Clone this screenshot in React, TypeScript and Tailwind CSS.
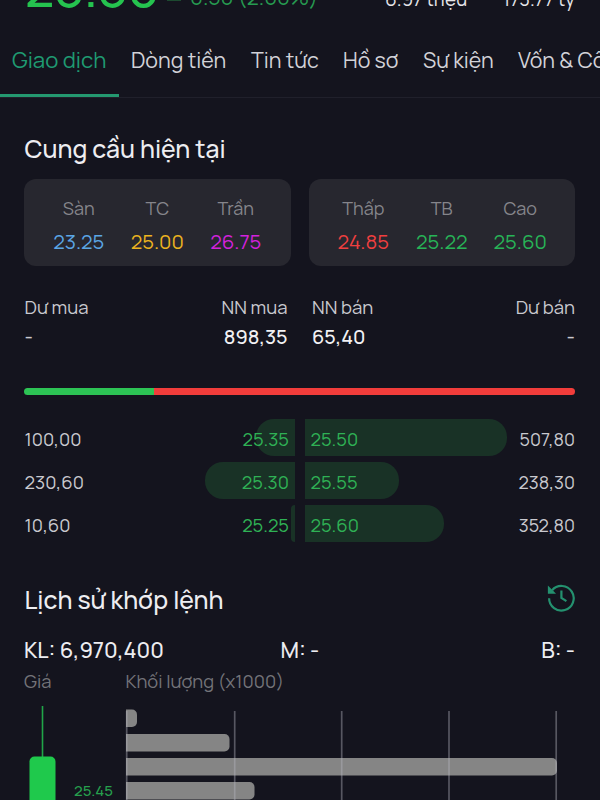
const tabs = [
  { label: 'Giao dịch', cls: 'w-[119px] pl-3 text-[22.2px] text-[#1f9b72]' },
  { label: 'Dòng tiền', cls: 'w-[120px] pl-3 text-[#d2d2d8]' },
  { label: 'Tin tức', cls: 'w-[92px] pl-3 text-[#d2d2d8]' },
  { label: 'Hồ sơ', cls: 'w-20 pl-3 text-[#d2d2d8]' },
  { label: 'Sự kiện', cls: 'w-[95px] pl-3 text-[#d2d2d8]' },
  { label: 'Vốn & Cổ đông', cls: 'pl-3 text-[#d2d2d8]' },
];

const bands = [
  [
    { label: 'Sàn', value: '23.25', color: 'text-[#5ba6e6]' },
    { label: 'TC', value: '25.00', color: 'text-[#edb41f]' },
    { label: 'Trần', value: '26.75', color: 'text-[#d322dc]' },
  ],
  [
    { label: 'Thấp', value: '24.85', color: 'text-[#ef3f3f]' },
    { label: 'TB', value: '25.22', color: 'text-[#27b457]' },
    { label: 'Cao', value: '25.60', color: 'text-[#27b457]' },
  ],
];

const depth = [
  { bidVol: '100,00', bid: '25.35', bidBar: 'w-[39px]', ask: '25.50', askVol: '507,80', askBar: 'w-[202px]' },
  { bidVol: '230,60', bid: '25.30', bidBar: 'w-[90px]', ask: '25.55', askVol: '238,30', askBar: 'w-[94.5px]' },
  { bidVol: '10,60', bid: '25.25', bidBar: 'w-1', ask: '25.60', askVol: '352,80', askBar: 'w-[139.5px]' },
];

const volumes = [
  { y: 9.5, end: 137 },
  { y: 34, end: 229.5 },
  { y: 58, end: 557 },
  { y: 82, end: 254.5 },
];

function QuoteHeader() {
  return (
    <header className="flex h-6 shrink-0 items-end overflow-hidden whitespace-nowrap pl-[25px] pr-[25px]">
      <div className="flex h-12 w-[142px] items-center text-[51px] font-medium leading-[48px] text-[#25c34f] -translate-y-[12px]">25.50</div>
      <div className="flex h-6 w-[23px] items-center -translate-y-[12px]"><span className="h-[2px] w-3.5 bg-[#1c4a30]" /></div>
      <div className="text-[21.2px] leading-6 w-[195px] text-[#269a50] -translate-y-[15px]">0.50 (2.00%)</div>
      <div className="text-[18.9px] leading-6 text-[#e6e6ea] -translate-y-[13px]">6.97 triệu</div>
      <div className="ml-auto text-[18.8px] leading-6 text-[#e6e6ea] -translate-y-[13px]">173.77 tỷ</div>
    </header>
  );
}

function HistoryIcon() {
  return (
    <svg className="h-[30px] w-[30px] shrink-0 -translate-y-[2px]" viewBox="0 0 30 30" fill="none" stroke="#24916f" strokeWidth="2.2">
      <path d="M3.1 15.2A12.3 12.3 0 1 0 6.1 7.2" />
      <path d="M1.9 2.6V10.8H10.1Z" fill="#24916f" stroke="none" />
      <path d="M15.4 7.4V14.9L20.4 18.1" />
    </svg>
  );
}

function VolumeChart() {
  return (
    <svg className="block h-[100px] w-[600px] shrink-0" viewBox="0 0 600 100">
      <path d="M42.5 6V58" stroke="#20a648" strokeWidth="1.6" />
      <rect x="29.5" y="56.5" width="26" height="60" rx="5" fill="#1fc94c" />
      <text x="74" y="96.3" fontSize="15" fontWeight="500" textLength="39" fill="#269f4d">25.45</text>
      {volumes.map((v) => (
        <path key={v.y} fill="#858585" d={`M126 ${v.y}H${v.end - 5}a5 5 0 0 1 5 5v7.5a5 5 0 0 1 -5 5H126Z`} />
      ))}
      {[126.7, 234.7, 341.7, 449, 556.2].map((x) => (
        <path key={x} d={`M${x} 11V100`} stroke="#b4b4be" strokeOpacity="0.42" strokeWidth="1.7" />
      ))}
    </svg>
  );
}

export default function App() {
  return (
    <div className="flex h-[800px] w-[600px] flex-col overflow-hidden bg-[#14141e] font-['Manrope','Inter',sans-serif] text-[#ededf1]">
      <QuoteHeader />
      <nav className="flex h-[74px] shrink-0 overflow-hidden whitespace-nowrap border-b border-[#20202b] text-[21.4px]">
        {tabs.map((t, i) => (
          <div key={t.label} className={`flex shrink-0 flex-col leading-[71px] ${t.cls}`}>
            <span className="h-[70px]">{t.label}</span>
            {i === 0 && <span className="-ml-3 h-[3.5px] bg-[#249970]" />}
          </div>
        ))}
      </nav>

      <h2 className="mt-[35px] h-8 shrink-0 pl-[24.5px] text-[24.8px] font-medium leading-8">Cung cầu hiện tại</h2>

      <section className="mt-3.5 flex shrink-0 gap-[18px] pl-6 pr-[25px]">
        {bands.map((band) => (
          <div key={band[0].label} className="grid h-[87px] flex-1 grid-cols-3 rounded-xl bg-[#27272f] px-[15.5px] pt-[17px] text-center">
            {band.map((b) => (
              <div key={b.label}>
                <div className="text-[18px] leading-6 text-[#85858b]">{b.label}</div>
                <div className={`mt-[9px] text-[20.3px] leading-6 ${b.color}`}>{b.value}</div>
              </div>
            ))}
          </div>
        ))}
      </section>

      <section className="mt-[27px] flex shrink-0 justify-between pl-[24.5px] pr-[25px] text-[18.5px] leading-7 text-[#c9c9cf]">
        <div className="w-[131px]"><div>Dư mua</div><div className="text-xl font-medium leading-8">-</div></div>
        <div className="w-[132px] text-right"><div>NN mua</div><div className="text-[19.8px] font-medium leading-8 text-[#f1f1f4]">898,35</div></div>
        <div className="ml-[24.5px] w-[131px]"><div>NN bán</div><div className="text-[19.8px] font-medium leading-8 text-[#f1f1f4]">65,40</div></div>
        <div className="flex-1 text-right"><div>Dư bán</div><div className="text-xl font-medium leading-8">-</div></div>
      </section>

      <div className="ml-6 mt-[35px] flex h-[7px] w-[551px] shrink-0 overflow-hidden rounded-full">
        <span className="w-[130px] bg-[#2dc455]" />
        <span className="flex-1 bg-[#f23d3b]" />
      </div>

      <section className="mt-6 flex shrink-0 flex-col gap-1.5 pl-6 pr-[25px] text-[18.4px] leading-[41px]">
        {depth.map((d) => (
          <div key={d.bid} className="flex h-[37px]">
            <span className="w-[100px] pl-[0.5px] text-[#c9c9cf]">{d.bidVol}</span>
            <div className="grid w-[171px] justify-items-end">
              <span className={`col-start-1 row-start-1 h-[37px] rounded-l-[18px] bg-[#193226] ${d.bidBar}`} />
              <span className="col-start-1 row-start-1 h-[37px] pr-1.5 text-[#2fb155]">{d.bid}</span>
            </div>
            <div className="ml-[9.5px] grid w-[202px] justify-items-start">
              <span className={`col-start-1 row-start-1 h-[37px] rounded-r-[18px] bg-[#193226] ${d.askBar}`} />
              <span className="col-start-1 row-start-1 h-[37px] pl-1.5 text-[#2fb155]">{d.ask}</span>
            </div>
            <span className="flex-1 text-right text-[18px] text-[#c9c9cf]">{d.askVol}</span>
          </div>
        ))}
      </section>

      <section className="mt-[41px] flex h-[34px] shrink-0 items-center justify-between pl-[24.5px] pr-6">
        <h2 className="text-[24.8px] font-medium leading-8">Lịch sử khớp lệnh</h2>
        <HistoryIcon />
      </section>

      <div className="mt-[17px] flex h-8 shrink-0 pl-6 pr-[25px] text-[21.8px] font-medium leading-8">
        <span className="w-[256.5px]">KL: 6,970,400</span>
        <span>M: -</span>
        <span className="ml-auto">B: -</span>
      </div>
      <div className="flex h-[34px] shrink-0 pl-6 text-[18.4px] leading-[31px] text-[#737379]">
        <span className="w-[101.5px]">Giá</span>
        <span>Khối lượng (x1000)</span>
      </div>
      <VolumeChart />
    </div>
  );
}
